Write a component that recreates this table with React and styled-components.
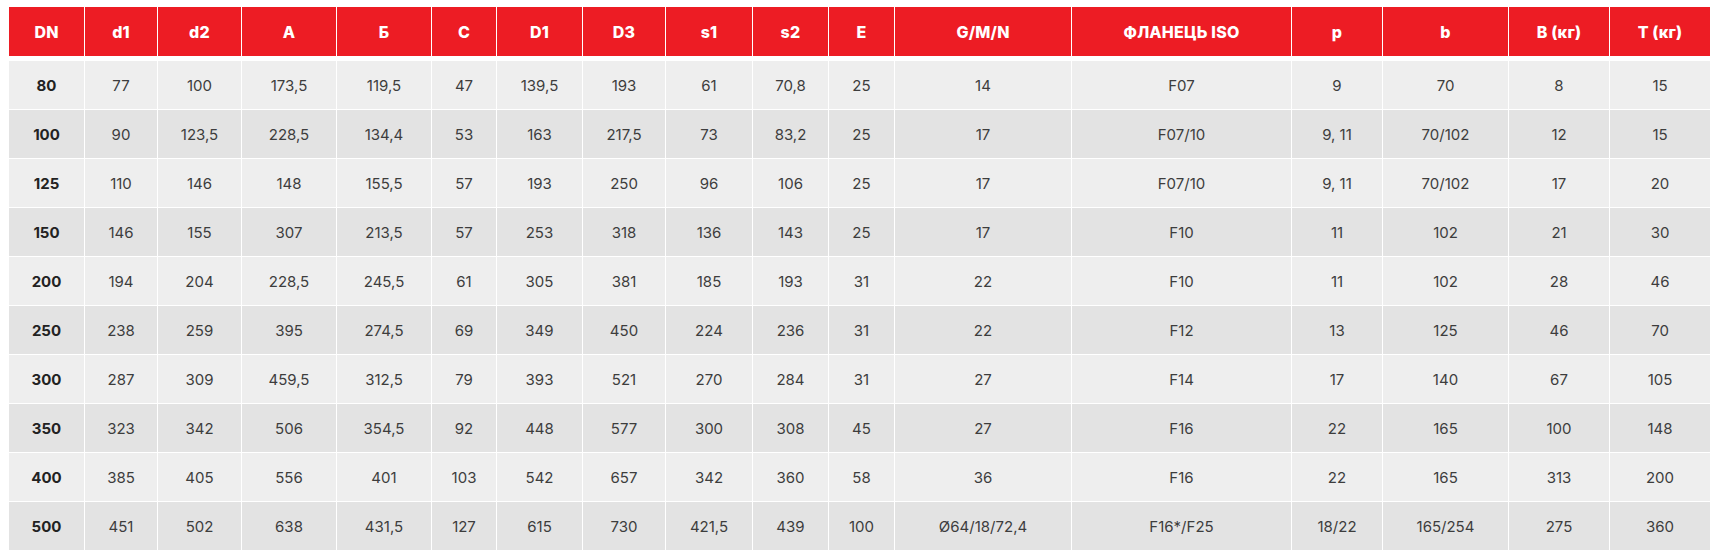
import React from 'react';
import styled, { createGlobalStyle } from 'styled-components';

const GlobalStyle = createGlobalStyle`
  html, body {
    margin: 0;
    padding: 0;
    background: #ffffff;
  }
  body {
    font-family: "Inter", "Open Sans", sans-serif;
  }
`

const columns = [
  { key: 'dn', label: 'DN', width: 76 },
  { key: 'd1', label: 'd1', width: 73 },
  { key: 'd2', label: 'd2', width: 84 },
  { key: 'a', label: 'A', width: 95 },
  { key: 'b6', label: 'Б', width: 95 },
  { key: 'c', label: 'C', width: 65 },
  { key: 'D1', label: 'D1', width: 86 },
  { key: 'D3', label: 'D3', width: 83 },
  { key: 's1', label: 's1', width: 87 },
  { key: 's2', label: 's2', width: 76 },
  { key: 'e', label: 'E', width: 66 },
  { key: 'gmn', label: 'G/M/N', width: 177 },
  { key: 'iso', label: 'ФЛАНЕЦЬ ISO', width: 220 },
  { key: 'p', label: 'p', width: 91 },
  { key: 'bb', label: 'b', width: 126 },
  { key: 'wb', label: 'B (кг)', width: 101 },
  { key: 'wt', label: 'T (кг)', width: 100 },
];

const rows = [
  ['80', '77', '100', '173,5', '119,5', '47', '139,5', '193', '61', '70,8', '25', '14', 'F07', '9', '70', '8', '15'],
  ['100', '90', '123,5', '228,5', '134,4', '53', '163', '217,5', '73', '83,2', '25', '17', 'F07/10', '9, 11', '70/102', '12', '15'],
  ['125', '110', '146', '148', '155,5', '57', '193', '250', '96', '106', '25', '17', 'F07/10', '9, 11', '70/102', '17', '20'],
  ['150', '146', '155', '307', '213,5', '57', '253', '318', '136', '143', '25', '17', 'F10', '11', '102', '21', '30'],
  ['200', '194', '204', '228,5', '245,5', '61', '305', '381', '185', '193', '31', '22', 'F10', '11', '102', '28', '46'],
  ['250', '238', '259', '395', '274,5', '69', '349', '450', '224', '236', '31', '22', 'F12', '13', '125', '46', '70'],
  ['300', '287', '309', '459,5', '312,5', '79', '393', '521', '270', '284', '31', '27', 'F14', '17', '140', '67', '105'],
  ['350', '323', '342', '506', '354,5', '92', '448', '577', '300', '308', '45', '27', 'F16', '22', '165', '100', '148'],
  ['400', '385', '405', '556', '401', '103', '542', '657', '342', '360', '58', '36', 'F16', '22', '165', '313', '200'],
  ['500', '451', '502', '638', '431,5', '127', '615', '730', '421,5', '439', '100', 'Ø64/18/72,4', 'F16*/F25', '18/22', '165/254', '275', '360'],
];

const Wrapper = styled.div`
  padding: 7px 11px 0 9px;
`

const Table = styled.table`
  width: 1701px;
  table-layout: fixed;
  border-collapse: separate;
  border-spacing: 0;
`

const HeadCell = styled.th`
  box-sizing: border-box;
  width: ${p => p.$w}px;
  height: 54px;
  padding: 0 0 5px;
  background: #ed1c24;
  background-clip: content-box;
  color: #ffffff;
  font-size: 16px;
  font-weight: 800;
  letter-spacing: 0.2px;
  text-align: center;
  vertical-align: middle;
  border-right: ${p => (p.$last ? 'none' : '1px solid #ffffff')};
  white-space: nowrap;
`

const Row = styled.tr`
  background: ${p => (p.$alt ? '#e3e3e3' : '#eeeeee')};
`

const Cell = styled.td`
  box-sizing: border-box;
  height: ${p => (p.$first ? 48 : 49)}px;
  padding: 0;
  text-align: center;
  vertical-align: middle;
  font-size: 15px;
  font-weight: ${p => (p.$bold ? 700 : 400)};
  color: ${p => (p.$bold ? '#222222' : '#3d3d3d')};
  border-right: ${p => (p.$last ? 'none' : '1px solid #ffffff')};
  border-top: ${p => (p.$first ? 'none' : '1px solid #ffffff')};
  white-space: nowrap;
`

export default function App() {
  return (
    <Wrapper>
      <GlobalStyle />
      <Table>
        <thead>
          <tr>
            {columns.map((col, i) => (
              <HeadCell key={col.key} $w={col.width} $last={i === columns.length - 1}>
                {col.label}
              </HeadCell>
            ))}
          </tr>
        </thead>
        <tbody>
          {rows.map((row, r) => (
            <Row key={row[0]} $alt={r % 2 === 1}>
              {row.map((value, c) => (
                <Cell
                  key={c}
                  $bold={c === 0}
                  $first={r === 0}
                  $last={c === row.length - 1}
                >
                  {value}
                </Cell>
              ))}
            </Row>
          ))}
        </tbody>
      </Table>
    </Wrapper>
  );
}
